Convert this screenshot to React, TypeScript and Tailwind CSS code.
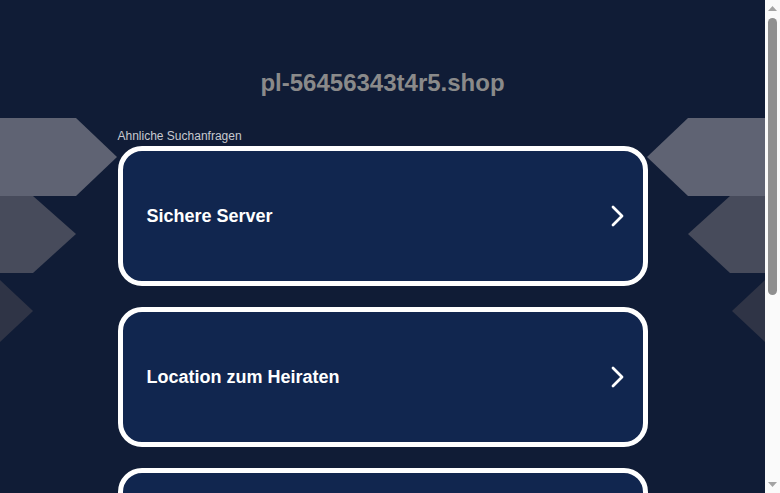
import React from "react"

const links = ["Sichere Server", "Location zum Heiraten", ""]

function Chevron() {
  return (
    <svg width="14" height="22" viewBox="0 0 14 22" className="shrink-0">
      <path d="M2 2 L11 11 L2 20" fill="none" stroke="#ffffff" strokeWidth="2.8" strokeLinecap="round" strokeLinejoin="round" />
    </svg>
  )
}

function LeftShapes() {
  return (
    <svg width="120" height="230" viewBox="0 0 120 230" className="absolute left-0 top-[118px]">
      <polygon points="0,0 76,0 117,39 76,78 0,78" fill="#5f6373" />
      <polygon points="0,78 33,78 76,116 33,155 0,155" fill="#474b5b" />
      <polygon points="0,162 33,193 0,224" fill="#2f3446" />
    </svg>
  )
}

function RightShapes() {
  return (
    <svg width="120" height="230" viewBox="0 0 120 230" className="absolute right-0 top-[118px]">
      <polygon points="120,0 43,0 2,39 43,78 120,78" fill="#5f6373" />
      <polygon points="120,78 85,78 43,116 85,155 120,155" fill="#474b5b" />
      <polygon points="120,162 87,193 120,224" fill="#2f3446" />
    </svg>
  )
}

function Scrollbar() {
  return (
    <div className="flex h-[493px] w-[15px] shrink-0 flex-col items-center bg-[#fafafa]">
      <svg width="15" height="15" viewBox="0 0 15 15" className="shrink-0">
        <polygon points="3,11 7.5,6 12,11" fill="#a3a3a3" />
      </svg>
      <div className="mt-[3px] h-[277px] w-[9px] rounded-full bg-[#8f8f8f]" />
      <div className="flex-1" />
      <svg width="15" height="15" viewBox="0 0 15 15" className="shrink-0">
        <polygon points="3,4 12,4 7.5,9" fill="#a3a3a3" />
      </svg>
    </div>
  )
}

export default function App() {
  return (
    <div className="flex h-[493px] w-[780px] overflow-hidden" style={{ fontFamily: '"Liberation Sans", Arial, sans-serif' }}>
      <main className="relative h-[493px] w-[765px] shrink-0 overflow-hidden bg-[#101c36]">
        <LeftShapes />
        <RightShapes />
        <div className="relative mx-auto w-[530px] pt-[69px]">
          <h1 className="text-center text-[24px] leading-[28px] font-bold text-[#8a8a8a] whitespace-nowrap">
            pl-56456343t4r5.shop
          </h1>
          <p className="mt-[32px] text-[12px] leading-[14px] text-[#c7c9cf]">Ahnliche Suchanfragen</p>
          <div className="mt-[3px] flex flex-col gap-[21px]">
            {links.map((t, i) => (
              <a
                key={i}
                href="#"
                className="flex h-[140px] shrink-0 items-center justify-between rounded-[24px] border-[5px] border-white bg-[#11264f] pl-[24px] pr-[18px]"
              >
                <span className="text-[18px] font-bold text-white">{t}</span>
                <Chevron />
              </a>
            ))}
          </div>
        </div>
      </main>
      <Scrollbar />
    </div>
  )
}
